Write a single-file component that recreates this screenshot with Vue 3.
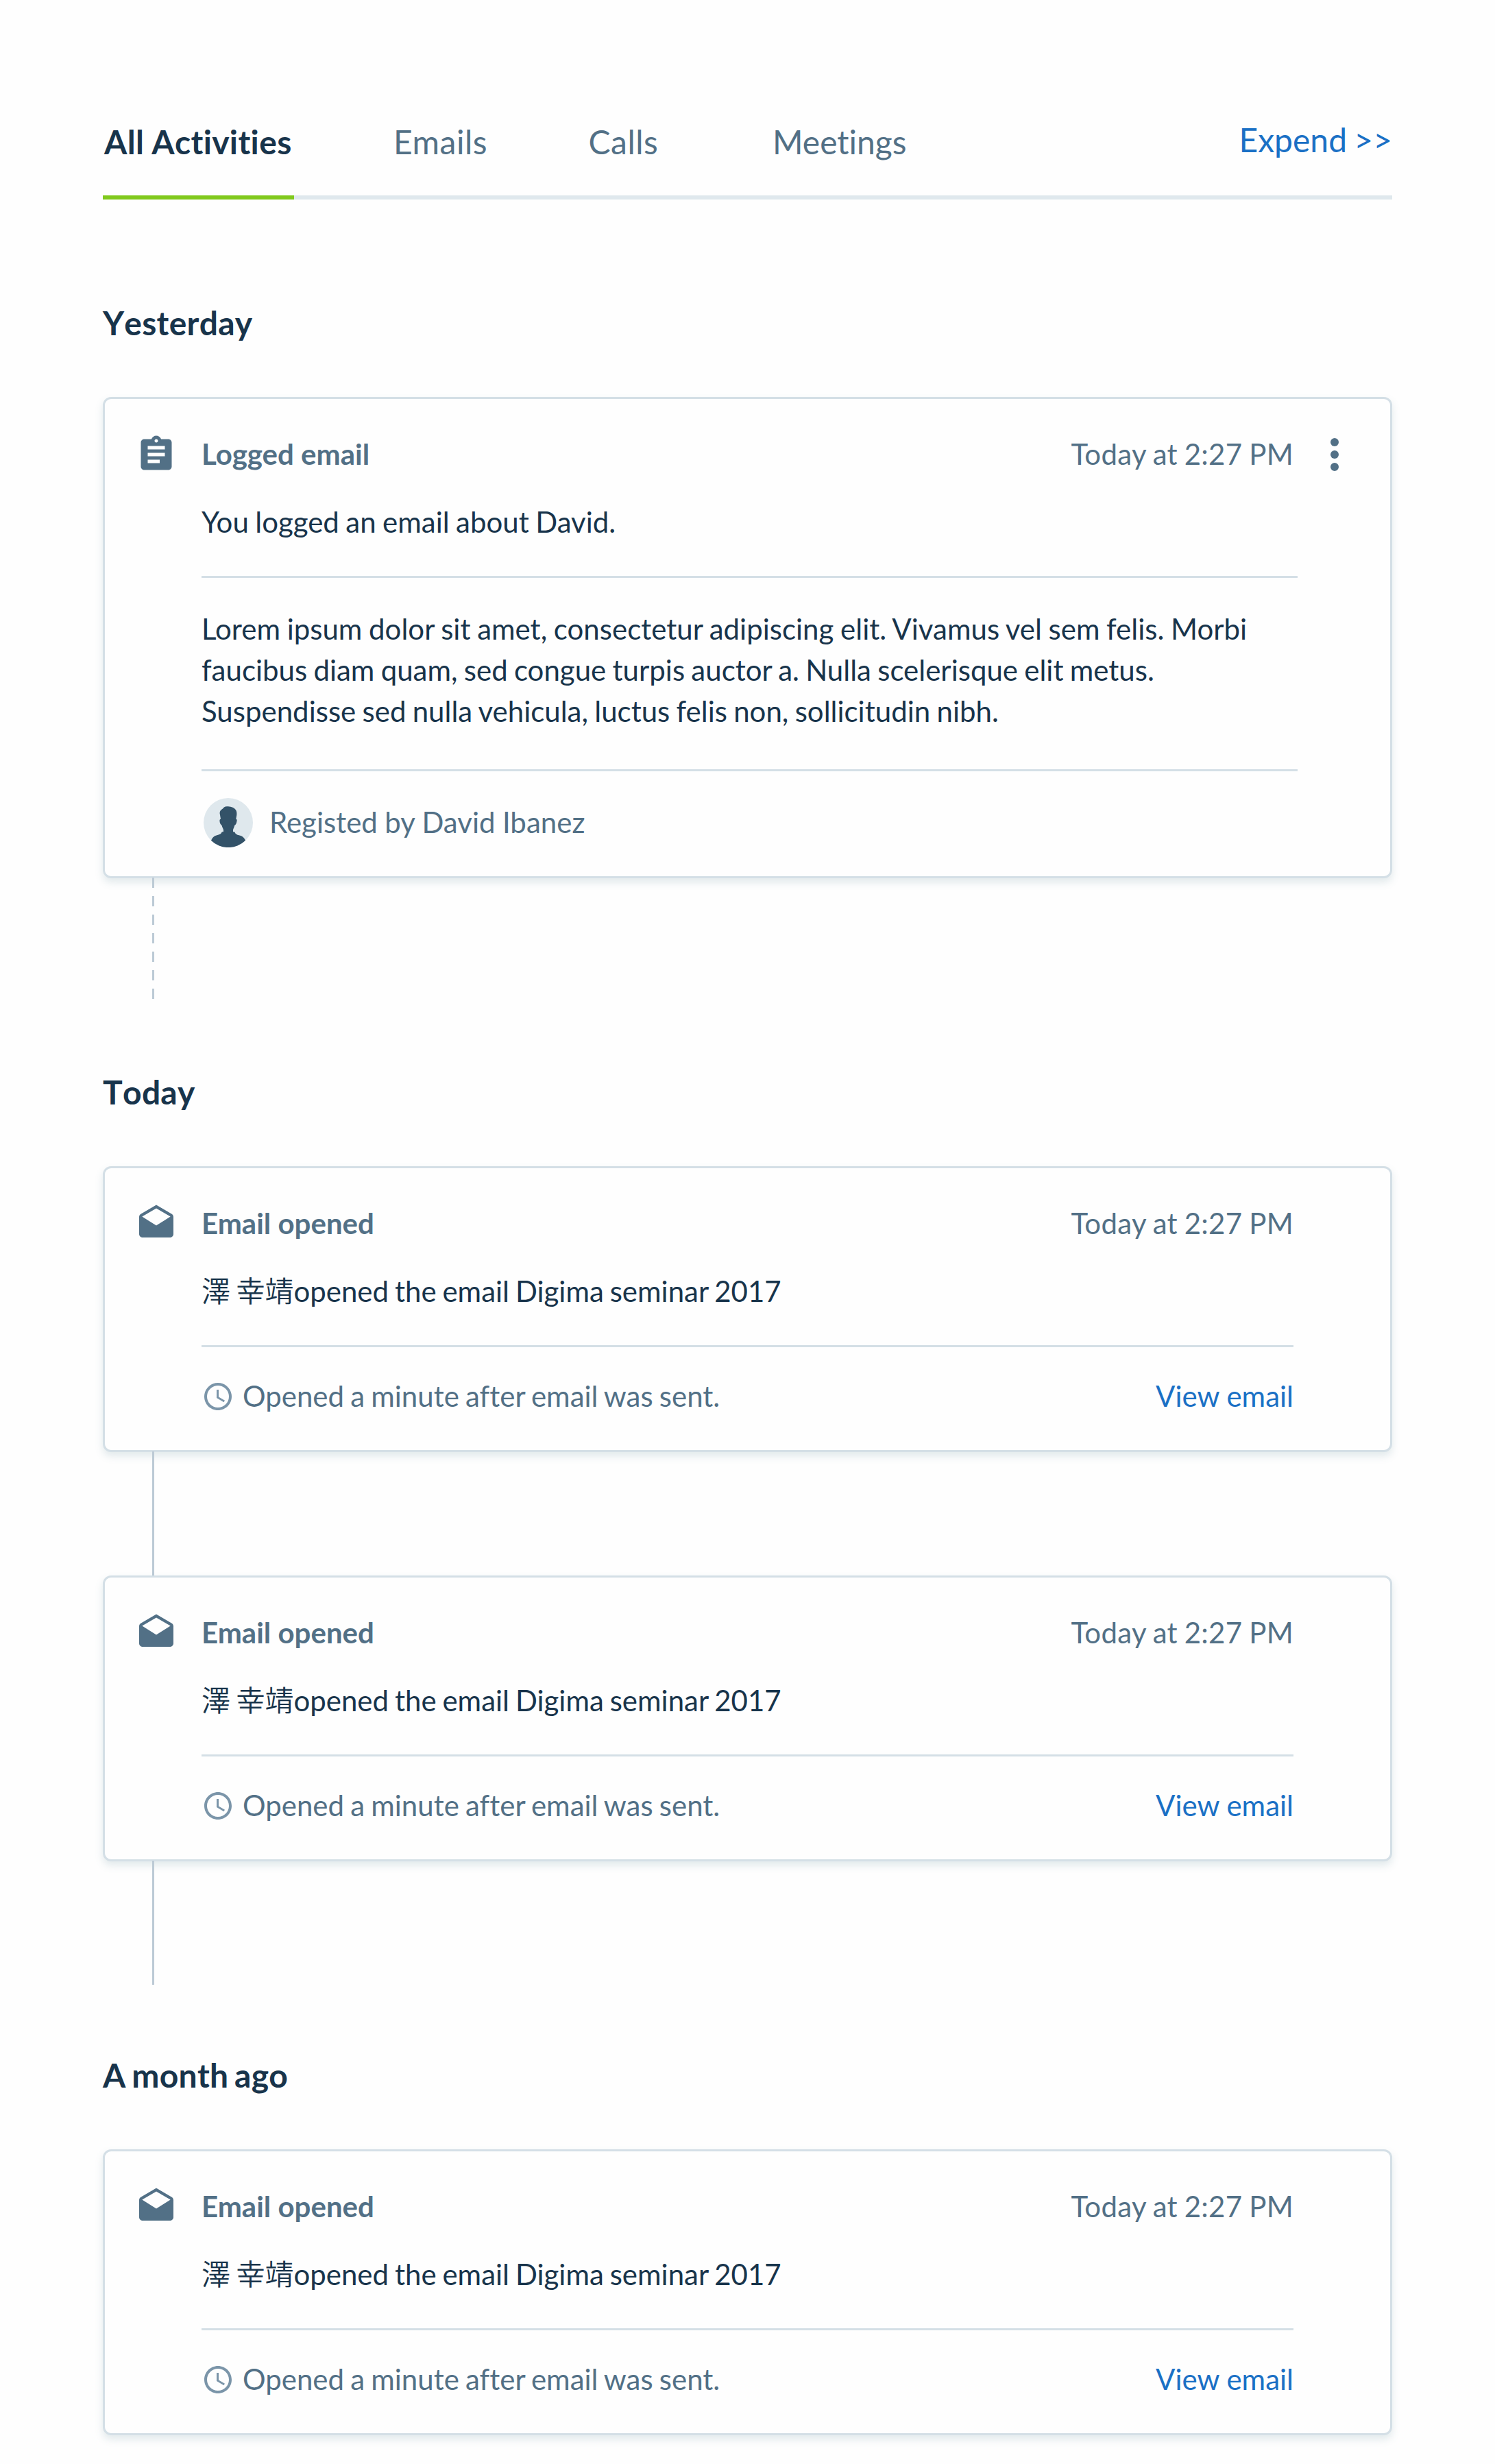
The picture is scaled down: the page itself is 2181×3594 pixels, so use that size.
<script setup>
const tabs = ['All Activities', 'Emails', 'Calls', 'Meetings']

const opened = {
  kind: 'opened',
  title: 'Email opened',
  time: 'Today at 2:27 PM',
  person: '澤 幸靖',
  text: 'opened the email Digima seminar 2017',
  note: 'Opened a minute after email was sent.',
}

const groups = [
  {
    label: 'Yesterday',
    tail: 'dashed',
    items: [
      {
        kind: 'logged',
        title: 'Logged email',
        time: 'Today at 2:27 PM',
        text: 'You logged an email about David.',
        body: [
          'Lorem ipsum dolor sit amet, consectetur adipiscing elit. Vivamus vel sem felis. Morbi',
          'faucibus diam quam, sed congue turpis auctor a. Nulla scelerisque elit metus.',
          'Suspendisse sed nulla vehicula, luctus felis non, sollicitudin nibh.',
        ],
        author: 'Registed by David Ibanez',
      },
    ],
  },
  { label: 'Today', tail: 'solid', items: [opened, opened] },
  { label: 'A month ago', tail: '', items: [opened] },
]
</script>

<template>
  <main class="page">
    <header class="header">
      <nav class="tabs">
        <a v-for="(tab, i) in tabs" :key="tab" class="tab" :class="{ active: i === 0 }">{{ tab }}</a>
      </nav>
      <a class="expand">Expend &gt;&gt;</a>
    </header>

    <section v-for="group in groups" :key="group.label" class="group">
      <h2 class="heading">{{ group.label }}</h2>
      <template v-for="(item, i) in group.items" :key="i">
        <article class="card" :class="item.kind">
          <svg class="icon" viewBox="0 0 24 24">
            <path
              v-if="item.kind === 'logged'"
              d="M19 3h-4.18C14.4 1.84 13.3 1 12 1c-1.3 0-2.4.84-2.82 2H5c-1.1 0-2 .9-2 2v14c0 1.1.9 2 2 2h14c1.1 0 2-.9 2-2V5c0-1.1-.9-2-2-2zm-7 0c.55 0 1 .45 1 1s-.45 1-1 1-1-.45-1-1 .45-1 1-1zm2 14H7v-2h7v2zm3-4H7v-2h10v2zm0-4H7V7h10v2z"
            />
            <path
              v-else
              d="M21.99 8c0-.72-.37-1.35-.94-1.7L12 1 2.95 6.3C2.38 6.65 2 7.28 2 8v10c0 1.1.9 2 2 2h16c1.1 0 2-.9 2-2l-.01-10zM12 13L3.74 7.84 12 3l8.26 4.84L12 13z"
            />
          </svg>
          <div class="content">
            <div class="row">
              <h3 class="title">{{ item.title }}</h3>
              <time class="muted time">{{ item.time }}</time>
            </div>
            <p class="summary"><span v-if="item.person" class="person">{{ item.person }}</span>{{ item.text }}</p>
            <hr class="rule" />
            <template v-if="item.kind === 'logged'">
              <p class="message">
                <span v-for="line in item.body" :key="line" class="line">{{ line }}</span>
              </p>
              <hr class="rule" />
              <div class="author">
                <svg class="avatar" viewBox="0 0 72 72">
                  <circle cx="36" cy="36" r="36" fill="#dfe8ed" />
                  <path
                    fill="#335268"
                    d="M34 12.2C30.600 12.200 29.500 13.600 28 15.400C25.500 16.900 23.300 19 23.600 22.500L25 30.500C23.200 31.300 23.200 32.700 23.700 35.500C24.100 37.900 25.600 39 26.600 40C27.200 43.500 29 45 29 47V49.200C27.500 49.200 26.500 49.400 26.300 50.300C25.500 52.600 23 53.500 19.500 54.300C15 55.200 12.500 58 11 62A36 36 0 0 0 61 62C59.500 58 56.500 55.200 51.500 54.300C48.500 53.600 46.500 52.500 45.700 50.300C45.300 49.400 44.500 49.200 43 49.200V47C43 45 44.600 43.500 45.200 40C46.600 39 47.700 37.900 48.100 35.500C48.900 32.700 49 31.300 47.300 30.500L48.300 25C48.600 21 48.300 19 46.500 16.700C43.500 13.200 39 12.200 34 12.200Z"
                  />
                </svg>
                <span class="muted">{{ item.author }}</span>
              </div>
            </template>
            <div v-else class="row foot">
              <span class="note">
                <svg class="clock" viewBox="0 0 24 24">
                  <path
                    d="M11.990 2C6.470 2 2 6.480 2 12s4.470 10 9.990 10C17.520 22 22 17.520 22 12S17.520 2 11.990 2zM12 20c-4.420 0-8-3.580-8-8s3.580-8 8-8 8 3.580 8 8-3.580 8-8 8zM12.500 7H11v6l5.250 3.150.75-1.230-4.500-2.670z"
                  />
                </svg>
                <span class="muted">{{ item.note }}</span>
              </span>
              <a class="link">View email</a>
            </div>
          </div>
          <svg v-if="item.kind === 'logged'" class="menu" viewBox="0 0 24 24">
            <circle cx="12" cy="6" r="2" />
            <circle cx="12" cy="12" r="2" />
            <circle cx="12" cy="18" r="2" />
          </svg>
        </article>
        <div v-if="i < group.items.length - 1" class="connector"></div>
        <div v-else-if="group.tail" class="connector tail" :class="group.tail"></div>
      </template>
    </section>
  </main>
</template>

<style>
body {
  background: #fefefe;
}
</style>

<style scoped>
.page {
  box-sizing: border-box;
  width: 2181px;
  height: 3594px;
  padding: 0 150px;
  overflow: hidden;
  background: #fefefe;
  color: #18344b;
  font: 400 42px/60px Lato, "Noto Sans CJK JP", sans-serif;
  font-variant-ligatures: none;
}
.header {
  box-sizing: border-box;
  display: flex;
  justify-content: space-between;
  height: 291px;
  padding-top: 177px;
  border-bottom: 6px solid #dfe8ed;
  font-size: 48px;
}
.tabs {
  display: grid;
  grid-template-columns: 424px 284.500px 268.500px auto;
}
.tab {
  position: relative;
  color: #527086;
  letter-spacing: 0.5px;
}
.tab:last-child {
  letter-spacing: 0;
}
.tab.active {
  padding-left: 2px;
  color: #18344b;
  font-weight: 700;
  font-kerning: none;
  letter-spacing: 0.35px;
  word-spacing: -1px;
}
.tab.active::after {
  content: "";
  position: absolute;
  left: 0;
  bottom: -6px;
  width: 279px;
  height: 6px;
  background: #80c91c;
}
.expand {
  margin-top: -3px;
  color: #1a70c5;
  word-spacing: -2px;
}
.heading {
  margin: 0;
  padding: 150px 0 78px;
  font-size: 48px;
  font-weight: 700;
  line-height: 60px;
  font-kerning: none;
  letter-spacing: 0.25px;
  word-spacing: -3.200px;
}
.card {
  position: relative;
  box-sizing: border-box;
  display: flex;
  align-items: flex-start;
  height: 417px;
  padding: 50px 0 0 45px;
  border: 3px solid #d4dfe6;
  border-radius: 12px;
  background: #fefefe;
  box-shadow: 0 6px 12px rgba(82, 128, 145, 0.17);
}
.card.logged {
  height: 702px;
}
.icon {
  flex: none;
  width: 60px;
  height: 60px;
  margin: 1px 36px 0 0;
  fill: #527086;
}
.content {
  flex: none;
  width: 1593px;
}
.row {
  display: flex;
  justify-content: space-between;
}
.title {
  margin: 0;
  font-size: 42px;
  font-weight: 700;
  color: #527086;
}
.muted {
  color: #527086;
}
.time {
  letter-spacing: 0.28px;
  word-spacing: -1.200px;
}
.summary {
  height: 60px;
  margin: 39px 0 49px;
  word-spacing: -1.900px;
}
.logged .summary {
  word-spacing: -1.300px;
}
.person {
  font-weight: 350;
  word-spacing: -3px;
}
.rule {
  height: 3px;
  margin: 0;
  border: 0;
  background: #d4dfe6;
}
.logged .rule {
  margin-right: -6px;
}
.message {
  margin: 44px 0 55px;
  word-spacing: -1.500px;
}
.line {
  display: block;
  white-space: nowrap;
}
.line:first-child {
  word-spacing: -1.100px;
}
.author {
  display: flex;
  gap: 24px;
  margin: 39px 0 0 3px;
}
.author .muted {
  margin-top: 5px;
  word-spacing: -0.300px;
}
.avatar {
  width: 72px;
  height: 72px;
}
.foot {
  margin-top: 41px;
}
.note {
  display: flex;
  gap: 12px;
  word-spacing: -1.600px;
}
.clock {
  width: 48px;
  height: 48px;
  margin-top: 7px;
  fill: #7b95a9;
}
.link {
  color: #1a70c5;
}
.menu {
  flex: none;
  width: 72px;
  height: 72px;
  margin: -5px 0 0 24px;
  fill: #527086;
}
.connector {
  position: relative;
  width: 3px;
  height: 181px;
  margin: -1px 0 0 72px;
  background: #bccad5;
}
.connector.tail {
  margin-bottom: -48px;
}
.connector.dashed {
  height: 177px;
  margin-bottom: -44px;
  background: repeating-linear-gradient(#bccad5 0 15px, transparent 15px 27px);
}
</style>
